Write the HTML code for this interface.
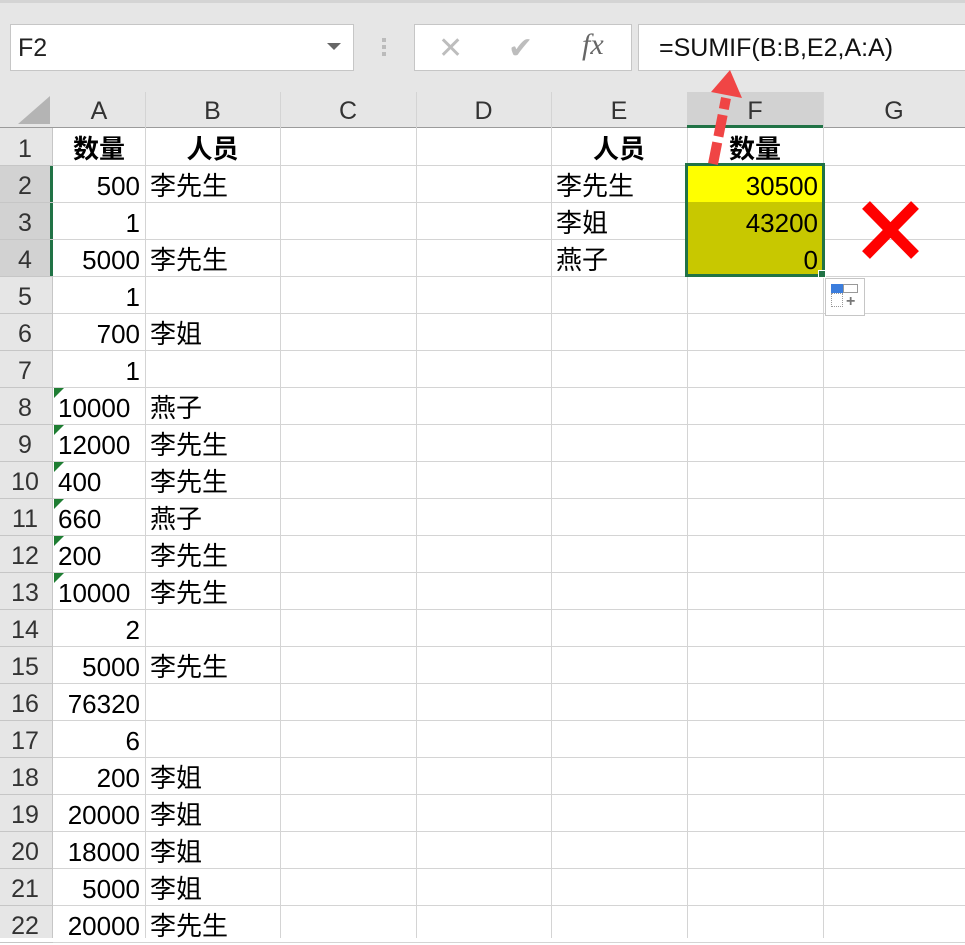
<!DOCTYPE html>
<html><head><meta charset="utf-8"><style>
*{margin:0;padding:0;box-sizing:border-box}
body{width:965px;height:938px;overflow:hidden;background:#fff;position:relative;font-family:"Liberation Sans","Noto Sans CJK SC",sans-serif}
.a{position:absolute}
.top{left:0;top:0;width:965px;height:92px;background:#e6e6e6;border-top:3px solid #d4d4d4}
.box{background:#fff;border:1px solid #c6c6c6}
.hdr{background:#e6e6e6;color:#333;font-size:25px;text-align:center;line-height:38px}
.c{position:absolute;font-size:26px;line-height:37px;height:37px;padding-top:3px;color:#000;white-space:nowrap}
.r{text-align:right}
.gl{position:absolute;background:#d4d4d4}
</style></head><body>
<div class="a top"></div>
<div class="a box" style="left:10px;top:24px;width:344px;height:47px"></div>
<div class="a" style="left:18px;top:34px;font-size:25px;color:#222">F2</div>
<div class="a" style="left:327px;top:43px;width:0;height:0;border-left:7px solid transparent;border-right:7px solid transparent;border-top:7px solid #666"></div>
<div class="a" style="left:382px;top:38px;width:4px;height:4px;background:#bbb;box-shadow:0 7px 0 #bbb,0 14px 0 #bbb"></div>
<div class="a box" style="left:414px;top:24px;width:218px;height:47px"></div>
<div class="a" style="left:438px;top:31px;font-size:30px;color:#bdbdbd">✕</div>
<div class="a" style="left:508px;top:31px;font-size:30px;color:#bdbdbd">✔</div>
<div class="a" style="left:582px;top:28px;font-size:30px;color:#666;font-family:'Liberation Serif',serif;font-style:italic">fx</div>
<div class="a box" style="left:638px;top:24px;width:330px;height:47px"></div>
<div class="a" style="left:659px;top:34px;font-size:25px;color:#111">=SUMIF(B:B,E2,A:A)</div>

<div class="a hdr" style="left:0;top:92px;width:965px;height:36px;border-bottom:1px solid #9b9b9b"></div>
<div class="a" style="left:18px;top:96px;width:0;height:0;border-left:32px solid transparent;border-bottom:28px solid #b4b4b4"></div>
<div id="cols"></div>
<div class="a" style="left:0;top:128px;width:53px;height:810px;background:#e6e6e6;border-right:1px solid #c6c6c6"></div>
<div class="a" style="left:0;top:165px;width:53px;height:111px;background:#d2d2d2;border-right:3px solid #217346"></div>
<div id="grid"></div>
<div class="a" style="left:687px;top:92px;width:136px;height:36px;background:#d2d2d2;border-bottom:3px solid #217346"></div>
<div class="a hdr" style="left:687px;top:92px;width:136px;background:none;color:#333">F</div>
<div class="a" style="left:686px;top:164px;width:139px;height:38px;background:#ffff00"></div>
<div class="a" style="left:686px;top:202px;width:139px;height:74px;background:#c8c800"></div>
<div class="a" style="left:685px;top:163px;width:140px;height:114px;border:3px solid #217346"></div>
<div class="a" style="left:818px;top:270px;width:8px;height:8px;background:#217346;border:1px solid #fff"></div>
<div class="a" style="left:825px;top:278px;width:40px;height:38px;background:#fff;border:1px solid #c6c6c6"></div>
<div class="a" style="left:831px;top:284px;width:12px;height:9px;background:#3b7ddd"></div>
<div class="a" style="left:843px;top:284px;width:15px;height:9px;border:1px solid #999"></div>
<div class="a" style="left:831px;top:293px;width:12px;height:14px;border:1px dotted #999"></div>
<div class="a" style="left:846px;top:293px;font-size:16px;font-weight:bold;color:#777">+</div>
<svg class="a" style="left:0;top:0" width="965" height="938">
<line x1="713" y1="164" x2="726" y2="98" stroke="#f04545" stroke-width="10" stroke-dasharray="22 6"/>
<polygon points="711,92 742,98 730,70" fill="#f04545"/>
<line x1="866" y1="205" x2="915" y2="255" stroke="#f00" stroke-width="11"/>
<line x1="915" y1="205" x2="866" y2="255" stroke="#f00" stroke-width="11"/>
</svg>
<script>
var cols=[["A",53,145],["B",145,280],["C",280,416],["D",416,551],["E",551,687],["F",687,823],["G",823,965]];
var h="";
cols.forEach(function(c){h+='<div class="gl" style="left:'+c[2]+'px;top:92px;width:1px;height:846px"></div>';
if(c[0]!="F")h+='<div class="a hdr" style="left:'+c[1]+'px;top:92px;width:'+(c[2]-c[1])+'px;background:none">'+c[0]+'</div>';});
document.getElementById("cols").innerHTML=h;
var A=["数量","500","1","5000","1","700","1","10000","12000","400","660","200","10000","2","5000","76320","6","200","20000","18000","5000","20000"];
var B=["人员","李先生","","李先生","","李姐","","燕子","李先生","李先生","燕子","李先生","李先生","","李先生","","","李姐","李姐","李姐","李姐","李先生"];
var g="";
for(var i=0;i<22;i++){var y=128+i*37;
g+='<div class="gl" style="left:53px;top:'+(y+37)+'px;width:912px;height:1px"></div>';
g+='<div class="gl" style="left:0;top:'+(y+37)+'px;width:53px;height:1px;background:#c6c6c6"></div>';
g+='<div class="c" style="left:0;top:'+y+'px;width:50px;text-align:center;color:#333;font-size:25px">'+(i+1)+'</div>';
var left=(i>=7&&i<=12);
if(i==0){g+='<div class="c" style="left:53px;top:'+y+'px;width:92px;text-align:center;font-weight:bold">数量</div><div class="c" style="left:145px;top:'+y+'px;width:135px;text-align:center;font-weight:bold">人员</div>';}
else{
if(left){g+='<div class="c" style="left:58px;top:'+y+'px">'+A[i]+'</div><div class="a" style="left:54px;top:'+(y+1)+'px;width:0;height:0;border-top:10px solid #1e7d32;border-right:10px solid transparent"></div>';}
else g+='<div class="c r" style="left:53px;top:'+y+'px;width:87px">'+A[i]+'</div>';
g+='<div class="c" style="left:150px;top:'+y+'px">'+B[i]+'</div>';}
}
g+='<div class="c" style="left:551px;top:128px;width:136px;text-align:center;font-weight:bold">人员</div>';
g+='<div class="c" style="left:687px;top:128px;width:136px;text-align:center;font-weight:bold;z-index:2">数量</div>';
var E=["李先生","李姐","燕子"],F=["30500","43200","0"];
for(var j=0;j<3;j++){var y=165+j*37;g+='<div class="c" style="left:556px;top:'+y+'px">'+E[j]+'</div><div class="c r" style="left:687px;top:'+y+'px;width:131px;z-index:3">'+F[j]+'</div>';}
document.getElementById("grid").innerHTML=g;
</script>
</body></html>
